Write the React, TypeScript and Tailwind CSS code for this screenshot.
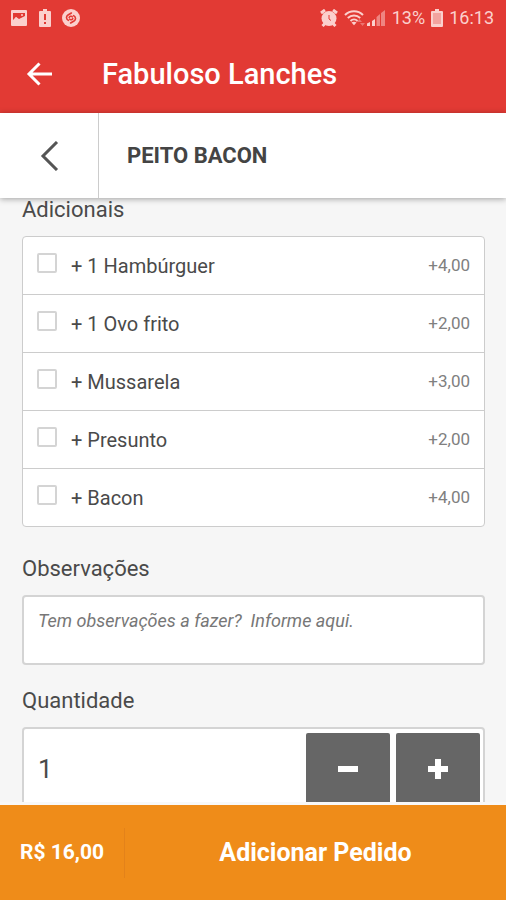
import { useState } from 'react';

interface Extra {
    id: string;
    name: string;
    price: string;
}

const extras: Extra[] = [
    { id: 'hamburguer', name: '+ 1 Hambúrguer', price: '+4,00' },
    { id: 'ovo', name: '+ 1 Ovo frito', price: '+2,00' },
    { id: 'mussarela', name: '+ Mussarela', price: '+3,00' },
    { id: 'presunto', name: '+ Presunto', price: '+2,00' },
    { id: 'bacon', name: '+ Bacon', price: '+4,00' },
];

function StatusBar() {
    return (
        <div className="flex h-9 items-center justify-between pl-2.5 pr-3 text-[#fbd0cd]">
            <div className="flex items-center gap-2.5">
                {/* Image */}
                <svg width="18" height="18" viewBox="0 0 18 18" aria-hidden="true">
                    <path fill="currentColor" fillRule="evenodd" d="M2 1h14a1 1 0 0 1 1 1v14a1 1 0 0 1-1 1H2a1 1 0 0 1-1-1V2a1 1 0 0 1 1-1Zm1 3v7l3-3 3 2 6-3V4Z" />
                    <path fill="currentColor" d="m3 12 3-4 3 3 3-2 3 3v1H3Z" />
                    <circle cx="12" cy="6" r="1" fill="currentColor" />
                </svg>
                {/* Battery alert */}
                <svg width="14" height="18" viewBox="0 0 14 18" aria-hidden="true">
                    <path fill="currentColor" fillRule="evenodd" d="M5 0h4v2h3a1 1 0 0 1 1 1v14a1 1 0 0 1-1 1H2a1 1 0 0 1-1-1V3a1 1 0 0 1 1-1h3Zm1 5v6h2V5Zm0 8v2h2v-2Z" />
                </svg>
                {/* Shazam */}
                <svg width="18" height="18" viewBox="0 0 18 18" aria-hidden="true">
                    <circle cx="9" cy="9" r="9" fill="currentColor" />
                    <path fill="none" stroke="#e23a34" strokeWidth="1.6" strokeLinecap="round" d="M6.4 11.4C3.7 9.7 4.1 7.3 6 6l3.4-2M11.6 6.6c2.7 1.7 2.3 4.1.4 5.4l-3.4 2M7.2 8.3c.5-1 2.4-1.6 3.1-.4M10.8 9.7c-.5 1-2.4 1.6-3.1.4" />
                </svg>
            </div>
            <div className="flex items-center gap-1.5 text-lg leading-none">
                {/* Alarm */}
                <svg width="18" height="18" viewBox="0 0 18 18" aria-hidden="true">
                    <circle cx="9" cy="9.5" r="7.5" fill="currentColor" />
                    <path stroke="currentColor" strokeWidth="3" d="m1 4 4-3M17 4l-4-3M2.5 17l3-3M15.5 17l-3-3" />
                    <path fill="none" stroke="#e23a34" strokeWidth="1" d="M9 6v4l2 1.5" />
                </svg>
                <div className="flex items-end">
                    {/* Wifi */}
                    <svg width="22" height="18" viewBox="0 0 22 18" aria-hidden="true">
                        <g fill="none" stroke="currentColor" strokeWidth="2">
                            <path d="M1 6c5-5 13-5 18 0" />
                            <path d="M3.8 9c3.6-3.5 8.8-3.5 12.4 0" />
                            <path d="M6.5 12c2-2 5-2 7 0" />
                        </g>
                        <path fill="currentColor" d="m7.5 13.4 2.5 2.8 2.5-2.8c-1.5-1-3.5-1-5 0Z" />
                        <path fill="currentColor" opacity=".4" d="m13 13 2.5-3 2.5 3ZM16 14h5l-2.5 3Z" />
                    </svg>
                    {/* Signal */}
                    <svg width="20" height="18" viewBox="0 0 20 18" aria-hidden="true">
                        <path fill="currentColor" d="M1 14.5 4 13v4H1ZM6 12l3-2v7H6Z" />
                        <path fill="currentColor" opacity=".5" d="M10.5 8 14 5v12h-3.5ZM15 4l4-3v16h-4Z" />
                    </svg>
                </div>
                <span>13%</span>
                {/* Battery */}
                <svg width="12" height="18" viewBox="0 0 12 18" aria-hidden="true">
                    <path fill="currentColor" d="M4 0h4v2h3a1 1 0 0 1 1 1v14a1 1 0 0 1-1 1H1a1 1 0 0 1-1-1V3a1 1 0 0 1 1-1h3Z" />
                    <path fill="#e23a34" opacity=".3" d="M2 4h8v11H2Z" />
                </svg>
                <span>16:13</span>
            </div>
        </div>
    );
}

export default function App() {
    const [selected, setSelected] = useState<string[]>([]);
    const [quantity, setQuantity] = useState(1);

    const toggleExtra = (id: string) => {
        setSelected(selected.includes(id) ? selected.filter(s => s !== id) : [...selected, id]);
    };

    return (
        <div className="flex h-screen flex-col bg-[#f6f6f6] font-['Roboto',sans-serif] text-[#4a4a4a]">
            <header className="bg-[#e23a34] pb-px text-white">
                <StatusBar />
                <div className="flex h-[76px] items-center gap-12 pl-6">
                    <button type="button" aria-label="Voltar" className="w-[30px]">
                        <svg width="30" height="30" viewBox="0 0 30 30" aria-hidden="true">
                            <path d="M28 15H5M15.5 4.5 5 15l10.5 10.5" fill="none" stroke="currentColor" strokeWidth="3" />
                        </svg>
                    </button>
                    <h1 className="text-[29px] leading-8 font-medium">Fabuloso Lanches</h1>
                </div>
            </header>

            <div className="z-10 flex h-[85px] shrink-0 items-stretch bg-white shadow-[0_1px_6px_rgba(0,0,0,0.35)]">
                <button type="button" aria-label="Fechar item" className="flex w-[99px] items-center justify-center border-r border-[#cccccc]">
                    <svg width="20" height="30" viewBox="0 0 20 30" aria-hidden="true">
                        <path d="M18 1 4 15l14 14" fill="none" stroke="#555555" strokeWidth="3" />
                    </svg>
                </button>
                <h2 className="self-center pl-7 text-[22px] leading-7 font-bold text-[#444444]">PEITO BACON</h2>
            </div>

            <main className="min-h-0 flex-1 overflow-hidden pr-[21px] pl-[22px]">
                <h3 className="mb-3.5 text-[22px] leading-6">Adicionais</h3>
                <ul className="divide-y divide-[#cccccc] rounded border border-[#cccccc] bg-white">
                    {extras.map(extra => (
                        <li key={extra.id}>
                            <label className="flex h-[57px] items-center px-3.5">
                                <input
                                    type="checkbox"
                                    checked={selected.includes(extra.id)}
                                    onChange={() => toggleExtra(extra.id)}
                                    className="mb-1.5 h-5 w-5 appearance-none rounded-xs border-2 border-[#d4d4d4] bg-white checked:bg-[#ef8c19]"
                                />
                                <span className="flex-1 pl-3.5 text-xl">{extra.name}</span>
                                <span className="text-[17px] text-[#808080]">{extra.price}</span>
                            </label>
                        </li>
                    ))}
                </ul>

                <label htmlFor="notes" className="mt-[26px] mb-2.5 block text-[22px] leading-8">Observações</label>
                <textarea
                    id="notes"
                    placeholder="Tem observações a fazer?  Informe aqui."
                    className="block h-[70px] w-full resize-none rounded border-2 border-[#d4d4d4] bg-white px-3.5 py-2.5 text-lg leading-7 italic placeholder:text-[#777777]"
                />

                <label htmlFor="quantity" className="mt-5 mb-2.5 block text-[22px] leading-8">Quantidade</label>
                <div className="flex h-[84px] gap-1.5 rounded border-2 border-[#d4d4d4] bg-white p-1 pr-[3px]">
                    <input
                        id="quantity"
                        type="text"
                        inputMode="numeric"
                        value={quantity}
                        onChange={e => setQuantity(Number(e.target.value) || 1)}
                        className="min-w-0 flex-1 bg-transparent pl-2.5 text-[26px] outline-none"
                    />
                    <button
                        type="button"
                        aria-label="Diminuir"
                        onClick={() => setQuantity(Math.max(1, quantity - 1))}
                        className="flex w-[84px] items-center justify-center rounded-xs bg-[#666666]"
                    >
                        <svg width="22" height="22" viewBox="0 0 22 22" aria-hidden="true">
                            <path d="M1 8h20v6H1Z" fill="#ffffff" />
                        </svg>
                    </button>
                    <button
                        type="button"
                        aria-label="Aumentar"
                        onClick={() => setQuantity(quantity + 1)}
                        className="flex w-[84px] items-center justify-center rounded-xs bg-[#666666]"
                    >
                        <svg width="22" height="22" viewBox="0 0 22 22" aria-hidden="true">
                            <path d="M8 1h6v7h7v6h-7v7H8v-7H1V8h7Z" fill="#ffffff" />
                        </svg>
                    </button>
                </div>
            </main>

            <footer className="flex h-[98px] shrink-0 items-center border-t-3 border-[#f8f8f8] bg-[#ef8c19] font-bold text-white">
                <span className="flex h-[50px] w-[125px] items-center justify-center border-r border-[#e3821a] text-[21px]">R$ 16,00</span>
                <button type="button" className="h-full flex-1 text-[25px]">Adicionar Pedido</button>
            </footer>
        </div>
    );
}
